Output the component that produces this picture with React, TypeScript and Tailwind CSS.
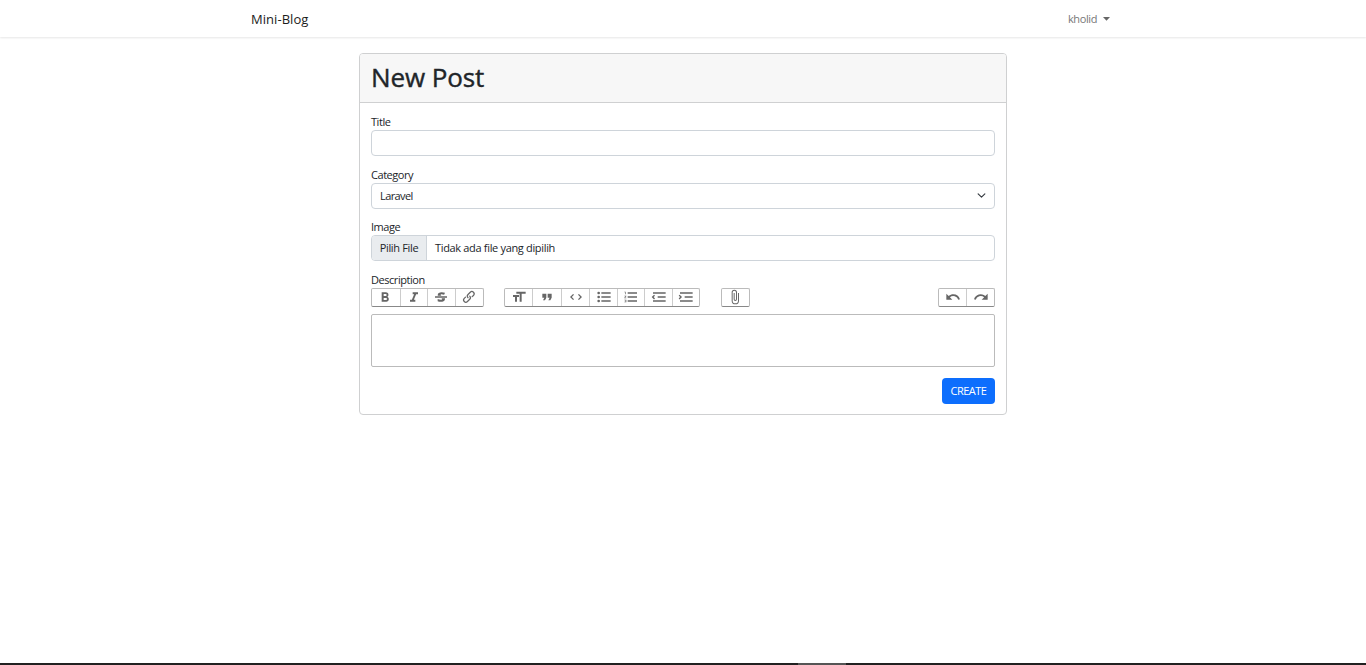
import type { ReactNode } from "react";

const paths = {
  bold: "M15.6 11.8c1-.7 1.6-1.8 1.6-2.8a4 4 0 0 0-4-4H7v14h7c2.1 0 3.7-1.7 3.7-3.8 0-1.5-.8-2.8-2.1-3.4zM10 7.5h3a1.5 1.5 0 1 1 0 3h-3v-3zm3.5 9H10v-3h3.5a1.5 1.5 0 1 1 0 3z",
  italic: "M10 5v3h2.2l-3.4 8H6v3h8v-3h-2.2l3.4-8H18V5h-8z",
  strike: "M12.73 14l.28.14c.26.15.45.3.57.44.12.14.18.3.18.5 0 .3-.15.56-.44.75-.3.2-.76.3-1.39.3A13.52 13.52 0 0 1 7 14.95v3.37a10.64 10.64 0 0 0 4.84.88c1.26 0 2.35-.19 3.28-.56.93-.37 1.64-.9 2.14-1.57s.74-1.45.74-2.32c0-.26-.02-.51-.06-.75h-5.21zm-5.5-4c-.08-.34-.12-.7-.12-1.1 0-1.29.52-2.3 1.58-3.02 1.05-.72 2.5-1.08 4.34-1.08 1.62 0 3.28.34 4.97 1l-1.3 2.93c-1.47-.6-2.73-.9-3.8-.9-.55 0-.96.08-1.2.26-.26.17-.38.38-.38.64 0 .27.16.52.48.74.17.12.53.3 1.05.53H7.23zM3 13h18v-2H3v2z",
  link: "M9.88 13.7a4.3 4.3 0 0 1 0-6.07l3.37-3.37a4.26 4.26 0 0 1 6.07 0 4.3 4.3 0 0 1 0 6.06l-1.96 1.72a.91.91 0 1 1-1.3-1.3l1.97-1.71a2.46 2.46 0 0 0-3.48-3.48l-3.38 3.37a2.46 2.46 0 0 0 0 3.48.91.91 0 1 1-1.3 1.3z M4.25 19.46a4.3 4.3 0 0 1 0-6.07l1.93-1.9a.91.91 0 1 1 1.3 1.3l-1.93 1.9a2.46 2.46 0 0 0 3.48 3.48l3.37-3.38c.96-.96.96-2.52 0-3.48a.91.91 0 1 1 1.3-1.3 4.3 4.3 0 0 1 0 6.07l-3.38 3.38a4.26 4.26 0 0 1-6.07 0z",
  heading: "M12 9v3H9v7H6v-7H3V9h9zM8 4h14v3h-6v12h-3V7H8V4z",
  quote: "M6 17h3l2-4V7H5v6h3zm8 0h3l2-4V7h-6v6h3z",
  code: "M18.2 12L15 15.2l1.4 1.4L21 12l-4.6-4.6L15 8.8l3.2 3.2zM5.8 12L9 8.8 7.6 7.4 3 12l4.6 4.6L9 15.2 5.8 12z",
  bullets: "M4 4a2 2 0 1 0 0 4 2 2 0 0 0 0-4zm0 6a2 2 0 1 0 0 4 2 2 0 0 0 0-4zm0 6a2 2 0 1 0 0 4 2 2 0 0 0 0-4zm4 3h14v-2H8v2zm0-6h14v-2H8v2zm0-8v2h14V5H8z",
  numbers: "M2 17h2v.5H3v1h1v.5H2v1h3v-4H2v1zm1-9h1V4H2v1h1v3zm-1 3h1.8L2 13.1v.9h3v-1H3.2L5 10.9V10H2v1zm5-6v2h14V5H7zm0 14h14v-2H7v2zm0-6h14v-2H7v2z",
  outdent: "M3 19h19v-2H3v2zm7-6h12v-2H10v2zm-8.3-.3l2.8 2.9L6 14.2 4 12l2-2-1.4-1.5L1 12l.7.7zM3 5v2h19V5H3z",
  indent: "M3 19h19v-2H3v2zm7-6h12v-2H10v2zm-6.9-1L1 14.2l1.4 1.4L6 12l-.7-.7-2.8-2.8L1 9.9 3.1 12zM3 5v2h19V5H3z",
  attach: "M16.5 6v11.5a4 4 0 1 1-8 0V5a2.5 2.5 0 0 1 5 0v10.5a1 1 0 1 1-2 0V6H10v9.5a2.5 2.5 0 0 0 5 0V5a4 4 0 1 0-8 0v12.5a5.5 5.5 0 0 0 11 0V6h-1.5z",
  undo: "M12.5 8c-2.6 0-5 1-6.9 2.6L2 7v9h9l-3.6-3.6A8 8 0 0 1 20 16l2.4-.8a10.5 10.5 0 0 0-10-7.2z",
  redo: "M18.4 10.6a10.5 10.5 0 0 0-16.9 4.6L4 16a8 8 0 0 1 12.7-3.6L13 16h9V7l-3.6 3.6z",
};

function Group({ children, className }: { children: ReactNode; className: string }) {
  return (
    <div className={`flex h-[19px] divide-x divide-[#ccc] rounded-[2px] border border-[#bbb] border-b-[#888] text-[#666] ${className}`}>
      {children}
    </div>
  );
}

function Tool({ label, d, className = "" }: { label: string; d: string; className?: string }) {
  return (
    <button type="button" aria-label={label} className={`flex min-w-0 flex-1 items-center justify-center pb-[2px] ${className}`}>
      <svg viewBox="0 0 24 24" className="size-4 shrink-0 fill-current">
        <path d={d} />
      </svg>
    </button>
  );
}

function Label({ children, className = "" }: { children: ReactNode; className?: string }) {
  return <label className={`block h-[16px] leading-[15px] tracking-[-0.45px] ${className}`}>{children}</label>;
}

export default function App() {
  return (
    <div className="flex h-[665px] flex-col bg-white font-['Open_Sans','Noto_Sans',sans-serif] text-[11px] leading-[17px] text-[#212529]">
      <nav className="h-[37px] shrink-0 bg-white shadow-[0_1px_2px_rgba(0,0,0,0.1)]">
        <div className="flex h-full items-center justify-between pt-px pr-[256px] pl-[251px]">
          <a className="text-[13px] tracking-[0.05px] text-[#1c1c1c]">Mini-Blog</a>
          <a className="flex items-center gap-[6px] pb-px tracking-[-0.4px] text-[#777]">
            kholid
            <svg viewBox="0 0 7 4" className="mt-px h-[4px] w-[7px] fill-[#666]">
              <path d="M0 0h7L3.5 3.7z" />
            </svg>
          </a>
        </div>
      </nav>

      <main className="mx-auto mt-[16px] h-[362px] w-[648px] shrink-0 rounded-[4px] border border-[#cfd0d1]">
        <header className="flex h-[49px] items-center rounded-t-[3px] border-b border-[#cfd0d1] bg-[#f7f7f7] px-[11px] pb-[2px]">
          <h1 className="text-[26px] leading-[30px] font-medium tracking-[-0.1px] [-webkit-text-stroke:0.4px_#212529]">New Post</h1>
        </header>
        <form className="px-[11px] pt-[11px]">
          <Label>Title</Label>
          <div className="h-[26px] rounded-[4px] border border-[#ced4da]" />

          <Label className="mt-[11px]">Category</Label>
          <div className="flex h-[26px] items-center justify-between rounded-[4px] border border-[#ced4da] px-2 pb-px tracking-[-0.6px]">
            Laravel
            <svg viewBox="0 0 16 16" className="size-[9px] fill-none stroke-[#343a40] stroke-2">
              <path d="m2 5 6 6 6-6" strokeLinecap="round" strokeLinejoin="round" />
            </svg>
          </div>

          <Label className="mt-[10px]">Image</Label>
          <div className="flex h-[26px] overflow-hidden rounded-[4px] border border-[#ced4da] tracking-[-0.33px]">
            <span className="flex w-[55px] items-center justify-center border-r border-[#ced4da] bg-[#e9ecef] pb-[2px]">Pilih File</span>
            <span className="flex items-center pb-[2px] pl-2">Tidak ada file yang dipilih</span>
          </div>

          <Label className="mt-[11px]">Description</Label>
          <div className="flex">
            <Group className="w-[113px]">
              <Tool label="Bold" d={paths.bold} className="pr-px" />
              <Tool label="Italic" d={paths.italic} />
              <Tool label="Strikethrough" d={paths.strike} />
              <Tool label="Link" d={paths.link} className="pr-px" />
            </Group>
            <Group className="ml-5 w-[196px]">
              <Tool label="Heading" d={paths.heading} className="pl-px" />
              <Tool label="Quote" d={paths.quote} className="pl-px" />
              <Tool label="Code" d={paths.code} className="pl-px" />
              <Tool label="Bullets" d={paths.bullets} className="pl-px" />
              <Tool label="Numbers" d={paths.numbers} />
              <Tool label="Decrease level" d={paths.outdent} />
              <Tool label="Increase level" d={paths.indent} />
            </Group>
            <Group className="ml-[21px] w-[29px]">
              <Tool label="Attach files" d={paths.attach} className="pr-px" />
            </Group>
            <Group className="ml-auto w-[57px]">
              <Tool label="Undo" d={paths.undo} />
              <Tool label="Redo" d={paths.redo} />
            </Group>
          </div>
          <div className="mt-[7px] h-[53px] rounded-[2px] border border-[#bbb]" />
          <div className="mt-[11px] flex justify-end">
            <button type="button" className="h-[26px] w-[53px] rounded-[4px] bg-[#0d6efd] pb-[2px] text-[11px] tracking-[-0.5px] text-white">
              CREATE
            </button>
          </div>
        </form>
      </main>

      <div className="mt-auto flex h-[2px] shrink-0 bg-[#212121]">
        <div className="ml-[798px] w-[48px] bg-[#555]" />
      </div>
    </div>
  );
}
